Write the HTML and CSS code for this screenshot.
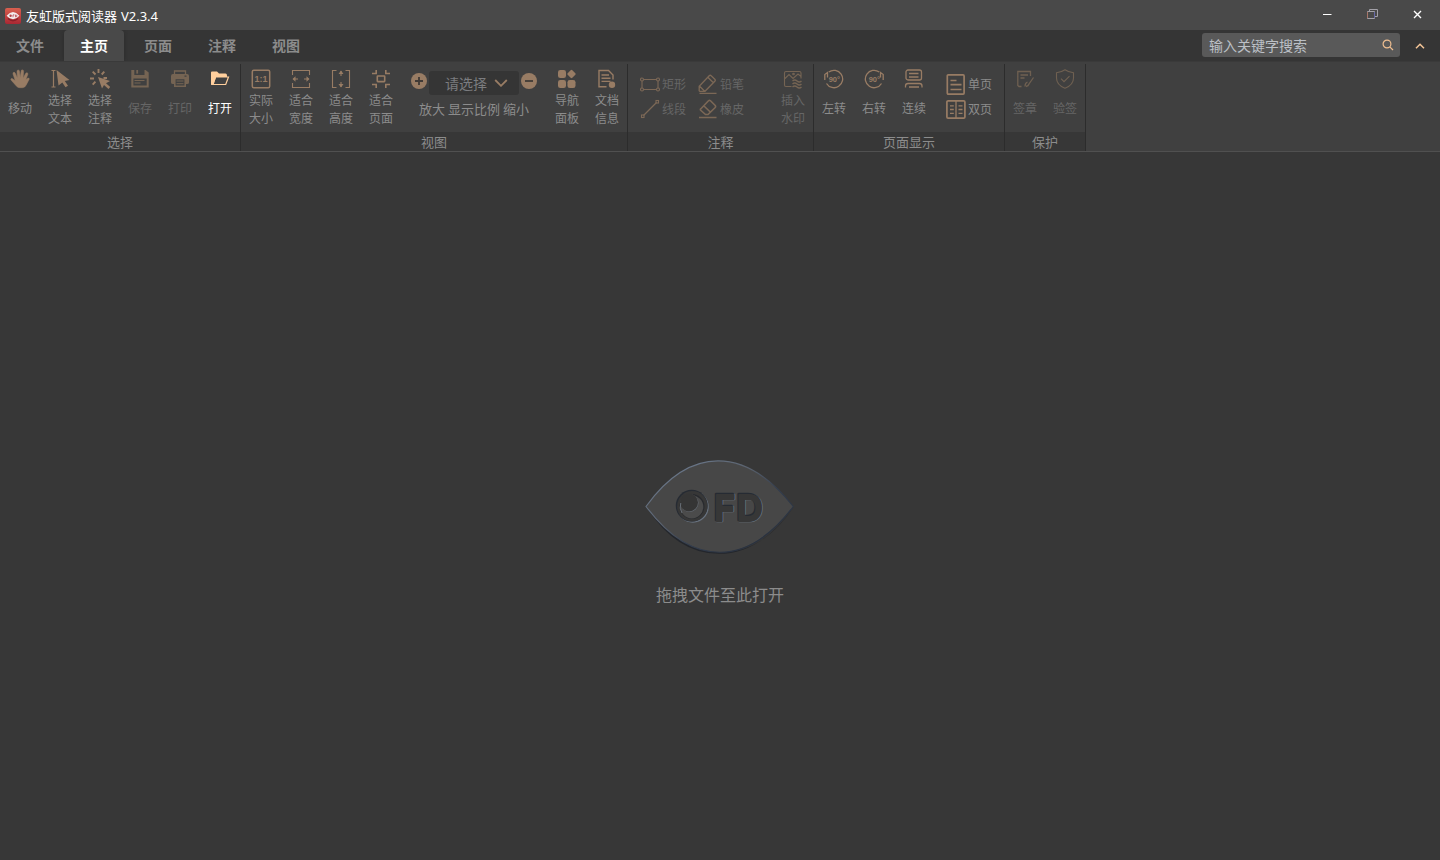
FILE: index.html
```html
<!DOCTYPE html>
<html lang="zh-CN">
<head>
<meta charset="utf-8">
<title>友虹版式阅读器 V2.3.4</title>
<link rel="stylesheet" href="styles.css">
</head>
<body>
<header class="titlebar">
  <svg class="logo" width="16" height="16" viewBox="0 0 16 16">
    <defs><linearGradient id="red" x1="0" y1="0" x2="0" y2="1"><stop offset="0" stop-color="#d9604f"/><stop offset="1" stop-color="#a92733"/></linearGradient></defs>
    <rect width="16" height="16" rx="2" fill="url(#red)"/>
    <path d="M3 10.500Q8 15 13 10.500" fill="none" stroke="#8b1f29" stroke-width="1.400"/>
    <path d="M1.600 7.700Q8 .5 14.400 7.700Q8 15 1.600 7.700Z" fill="#f3eeee"/>
    <circle cx="5.600" cy="7.700" r="1.200" fill="#b8434a"/><path d="M8 9.200V6.900h1.400M10.500 6.900v2q1.600 0 1.500-1T10.500 6.900" fill="none" stroke="#b8434a" stroke-width=".8"/>
  </svg>
  <h1 class="title">友虹版式阅读器 <span class="version">V2.3.4</span></h1>
  <div class="window-controls">
    <svg width="45" height="30" viewBox="0 0 45 30"><path d="M18 14.500h8.500" stroke="#fff" stroke-width="1"/></svg>
    <svg width="45" height="30" viewBox="0 0 45 30" fill="none" stroke="#a3a1a8"><path d="M17.500 11.500h7v7h-7z"/><path d="M19.500 11.500v-2h8v7h-3"/><path d="M17.500 12v6" stroke="#a77568"/><path d="M24.500 12v6" stroke="#6669a8"/></svg>
    <svg width="45" height="30" viewBox="0 0 45 30"><path d="M19 11l7 7M26 11l-7 7" stroke="#fff" stroke-width="1.400"/></svg>
  </div>
</header>

<nav class="tabs">
  <a class="tab">文件</a>
  <a class="tab tab-active">主页</a>
  <a class="tab">页面</a>
  <a class="tab">注释</a>
  <a class="tab">视图</a>
  <div class="search">
    <span>输入关键字搜索</span>
    <svg width="12" height="12" viewBox="0 0 12 12" fill="none" stroke="#f0bf91" stroke-width="1.200"><circle cx="5" cy="5" r="3.900"/><path d="M7.800 7.800L11 11"/></svg>
  </div>
  <svg class="collapse" width="10" height="6" viewBox="0 0 10 6" fill="none" stroke="#f5c698" stroke-width="1.500"><path d="M1 5.200l4-4 4 4"/></svg>
</nav>

<section class="ribbon">
  <div class="group group-select">
    <div class="tools">
      <div class="tool">
        <svg class="icon" viewBox="0 0 20 20"><path fill="currentColor" stroke="currentColor" stroke-width=".5" d="M6.800 17.500L1.200 11.200Q.2 9.800 1.500 9.500Q2.600 9.400 3.600 10.500L5.200 11.500L3 5Q2.700 3.400 3.900 3.300Q4.900 3.200 5.400 4.500L7.400 9L7 2.500Q7 1 8.200 1Q9.400 1 9.500 2.500L10.200 8.600L11.200 2Q11.400.7 12.500.9Q13.700 1 13.600 2.500L13.100 9.200L15.600 4.600Q16.200 3.400 17.200 3.800Q18.200 4.200 17.800 5.500L15.800 10.500L17.600 9.300Q19.600 8.600 19.200 10.300L16.200 16Q15 18.700 12.500 18.700H10Q8 18.700 6.800 17.500Z"/></svg>
        <span>移动</span>
      </div>
      <div class="tool two-line">
        <svg class="icon" viewBox="0 0 20 20"><path d="M1.500 1.500h4M1.500 18h4M3.500 1.500V18" stroke-width="1.200"/><path d="M6.500 1L19.500 11L14.800 12L18 16.800L15.500 18.300L12.300 13.500L8.500 16.500Z" fill="currentColor" stroke="none"/></svg>
        <span>选择<br>文本</span>
      </div>
      <div class="tool two-line">
        <svg class="icon" viewBox="0 0 20 20"><path d="M8.500 0v4M2.700 2.700l2.800 2.800M14.300 2.700l-2.600 2.800M0 9.500h4M2.700 15.700l2.700-3M13.500 9h3.500" stroke-width="1.900"/><path d="M8 8L20 12L16 14.200L20.300 18L18.500 20L14 15.900L12 19.500Z" fill="currentColor" stroke="none"/></svg>
        <span>选择<br>注释</span>
      </div>
      <div class="tool disabled">
        <svg class="icon" viewBox="0 0 20 20" fill="currentColor" stroke="none"><path class="solid" d="M1.300 1H4.300V6H14.500V1H15.500L18.700 3.500V18.600H1.300ZM3.400 9.500V16.600H16.700V9.500Z" fill-rule="evenodd"/><path class="solid" d="M6.300 1h1.800v3.600H6.300z"/><path d="M4.500 11.500h10M4.500 14h6" stroke="currentColor" stroke-width="1"/></svg>
        <span>保存</span>
      </div>
      <div class="tool disabled">
        <svg class="icon" viewBox="0 0 20 20"><path d="M4.500 5.500V2h11v3.500" stroke-width="1.300"/><path class="solid" d="M3 5h14q2 0 2 2v6.500q0 1.500-2 1.500h-1v3H4v-3H3q-2 0-2-1.500V7q0-2 2-2zm2.600 5.200v6.400h8.800v-6.400zM14.500 6.500v1.200h2V6.500z" fill-rule="evenodd"/><path d="M6.500 12h7M6.500 14.700h7"/></svg>
        <span>打印</span>
      </div>
      <div class="tool active">
        <svg class="icon" viewBox="0 0 20 20"><path class="solid" d="M1 15.500V3.500Q1 2.500 2 2.500h5l2 2h6.500q1.500 0 1.500 2v1.500H6L3.500 16H2Q1 16 1 15.500Z"/><path d="M5.600 8H18.500L15.700 15.500H2.700Z" stroke-width="1.200"/></svg>
        <span>打开</span>
      </div>
    </div>
    <div class="caption">选择</div>
  </div>

  <div class="group group-view">
    <div class="tools">
      <div class="tool two-line">
        <svg class="icon" viewBox="0 0 20 20"><rect x="1.300" y="1.300" width="17.400" height="17.400" rx="1.500" stroke-width="1.500"/><text class="scale-text" x="10" y="13">1:1</text></svg>
        <span>实际<br>大小</span>
      </div>
      <div class="tool two-line">
        <svg class="icon thin" viewBox="0 0 20 20"><path d="M1.500 6V1.500h17V6M1.500 14v4.500h17V14M2 10h5M18 10h-5"/><path class="solid" d="M4.500 7.300L1.500 10l3 2.700zM15.500 7.300l3 2.700-3 2.700z"/></svg>
        <span>适合<br>宽度</span>
      </div>
      <div class="tool two-line">
        <svg class="icon thin" viewBox="0 0 20 20"><path d="M5.500 1.500h-4v17h4M14.500 1.500h4v17h-4M10 2v5M10 18v-5"/><path class="solid" d="M7.500 5L10 1.500 12.500 5zM7.500 15l2.500 3.500 2.500-3.500z"/></svg>
        <span>适合<br>高度</span>
      </div>
      <div class="tool two-line">
        <svg class="icon page-fit" viewBox="0 0 20 20"><rect x="6.300" y="7" width="7.400" height="5.600" rx=".5"/><path d="M5.200 1v3.500H1M14.800 1v3.500H19M5.200 19v-3.500H1M14.800 19v-3.500H19"/></svg>
        <span>适合<br>页面</span>
      </div>
      <div class="zoom">
        <div class="zoom-row">
          <svg width="16" height="16" viewBox="0 0 16 16"><circle cx="8" cy="8" r="8" fill="#987c64"/><path d="M4 8h8M8 4v8" stroke="#403a36" stroke-width="1.800"/></svg>
          <div class="select"><span>请选择</span><svg width="14" height="8" viewBox="0 0 14 8" fill="none" stroke="#987c64" stroke-width="1.800"><path d="M1.200 1l5.800 5.800L12.800 1"/></svg></div>
          <svg width="16" height="16" viewBox="0 0 16 16"><circle cx="8" cy="8" r="8" fill="#987c64"/><path d="M4 8h8" stroke="#403a36" stroke-width="1.800"/></svg>
        </div>
        <div class="zoom-labels"><span>放大</span><span>显示比例</span><span>缩小</span></div>
      </div>
      <div class="tool two-line">
        <svg class="icon" viewBox="0 0 20 20"><g class="solid"><rect x="1" y="1" width="8" height="8" rx="2.300"/><rect x="11.200" y="1.700" width="6.600" height="6.600" rx="1.200" transform="rotate(45 14.500 5)"/><rect x="1" y="11" width="8" height="8" rx="2.300"/><rect x="10.500" y="11" width="8" height="8" rx="2.300"/></g></svg>
        <span>导航<br>面板</span>
      </div>
      <div class="tool two-line">
        <svg class="icon" viewBox="0 0 20 20"><g stroke-width="1.400"><path d="M9.500 17.800H2V1.500h9.500L16 6V10.500M4.500 6h7.500M4.500 9.200h9M4.500 12.400h9"/></g><circle class="solid" cx="15" cy="15.700" r="3.200"/></svg>
        <span>文档<br>信息</span>
      </div>
    </div>
    <div class="caption">视图</div>
  </div>

  <div class="group group-note">
    <div class="tools">
      <div class="pairs">
        <div class="pair"><svg class="icon thin" viewBox="0 0 20 20"><path d="M3.500 5.500h13M3.500 15.500h13M2 7v7M18 7v7"/><circle cx="2" cy="5.500" r="1.500"/><circle cx="18" cy="5.500" r="1.500"/><circle cx="2" cy="15.500" r="1.500"/><circle cx="18" cy="15.500" r="1.500"/></svg><span>矩形</span></div>
        <div class="pair"><svg class="icon" viewBox="0 0 20 20"><path d="M1.200 17.300V12.200L11.200 1.800Q12.200.8 13.200 1.800L16.800 5.200Q17.800 6.200 16.800 7.200L7 17.300H1.200M9.800 3.200l5.600 5.600M1.700 12.200l5 5M1.500 19.500h17" stroke-width="1.300"/></svg><span>铅笔</span></div>
        <div class="pair"><svg class="icon thin" viewBox="0 0 20 20"><path d="M3.500 16.500L16.500 3.500" stroke-width="1.300"/><rect x="1.500" y="16" width="2.500" height="2.500"/><rect x="16" y="1.500" width="2.500" height="2.500"/></svg><span>线段</span></div>
        <div class="pair"><svg class="icon" viewBox="0 0 20 20"><path d="M2.700 10L10.500 1.800Q11.500.8 12.500 1.800L17.200 6.500Q18 7.500 17.200 8.500L10 15.500H7.500L2.700 11.300Q2 10.500 2.700 10ZM6 7l6.500 6.300M1 18.500h17.500" stroke-width="1.600"/></svg><span>橡皮</span></div>
      </div>
      <div class="tool two-line disabled watermark">
        <svg class="icon thin" viewBox="0 0 20 20"><path d="M8.500 17.500H3Q1.500 17.500 1.500 16V4Q1.500 2.500 3 2.500h13.500Q18 2.500 18 4v5.500M2 9.500l4-4 4 4 5-4.500 3 2.500"/><circle cx="10.500" cy="5" r=".8"/><path d="M9.500 12q2.200-2 4.500 0t4.500 0M9.500 15q2.200-2 4.500 0t4.500 0M9.500 18q2.200-2 4.500 0t4.500 0" stroke-width="1.400"/></svg>
        <span>插入<br>水印</span>
      </div>
    </div>
    <div class="caption">注释</div>
  </div>

  <div class="group group-page">
    <div class="tools">
      <div class="tool">
        <svg class="icon" viewBox="0 0 20 20"><g stroke-width="1.300"><path d="M4.800 3A8.700 8.700 0 1 1 2.500 14.500M.8 11V5.500L3.500 3.500V8.500"/></g><text class="angle-text" x="10.300" y="12.800">90°</text></svg>
        <span>左转</span>
      </div>
      <div class="tool">
        <svg class="icon" viewBox="0 0 20 20"><g stroke-width="1.300"><path d="M15.200 3A8.700 8.700 0 1 0 17.500 14.500M19.200 11V5.500L16.500 3.500V8.500"/></g><text class="angle-text" x="10.300" y="12.800">90°</text></svg>
        <span>右转</span>
      </div>
      <div class="tool">
        <svg class="icon" viewBox="0 0 20 20"><g stroke-width="1.300"><rect x="2" y="1" width="15.500" height="10" rx="2"/><path d="M5 4.500h9.500M5 8h9.500M1.500 18.500v-1.500q0-2.500 2.500-2.500h11.500q2.500 0 2.500 2.500v1.500M5 18h10"/></g></svg>
        <span>连续</span>
      </div>
      <div class="pages">
        <div class="page-mode"><svg class="page-icon" viewBox="0 0 20 21"><rect x="1.300" y=".9" width="16.800" height="19.200" rx="1"/><path d="M4.500 6.500h6M4.500 10.700h11M4.500 15.500h11"/></svg><span>单页</span></div>
        <div class="page-mode"><svg class="page-icon" viewBox="0 0 20 21"><rect x=".9" y="1.800" width="18" height="17.400" rx="1.200"/><path d="M10 1.500v18M4 6.800h3.800M4 10.500h3.800M4 14.300h3.800M12.500 6.800h4M12.500 10.500h4M12.500 14.300h4" stroke-width="1.300"/></svg><span>双页</span></div>
      </div>
    </div>
    <div class="caption">页面显示</div>
  </div>

  <div class="group group-protect">
    <div class="tools">
      <div class="tool disabled">
        <svg class="icon" viewBox="0 0 20 20"><path d="M6.500 17.500H4L2.800 16.500V2.500H15.500V7M5.500 6h7.500M5.500 9h4M10 17.500Q10 14 12.500 13M11 17.500Q13.500 17 14 15L18.500 8.500" stroke-width="1.300"/></svg>
        <span>签章</span>
      </div>
      <div class="tool disabled">
        <svg class="icon" viewBox="0 0 20 20"><path d="M10 .8Q14 3.500 18.500 3.800V9Q18.500 16 10 19.200Q1.500 16 1.500 9V3.800Q6 3.500 10 .8ZM6 9.700l3 3 5.500-5.500" stroke-width="1.100"/></svg>
        <span>验签</span>
      </div>
    </div>
    <div class="caption">保护</div>
  </div>
</section>

<main class="workspace">
  <svg class="eye" width="150" height="96" viewBox="0 0 150 96">
    <defs>
      <linearGradient id="rim" x1="0" y1="0" x2="1" y2="1"><stop offset="0" stop-color="#74849a"/><stop offset=".4" stop-color="#59616d"/><stop offset=".6" stop-color="#343e4e"/><stop offset="1" stop-color="#202835"/></linearGradient>
    </defs>
    <path d="M3 49Q33 95 75 94.800T149.700 48Q119 94 75 93.500" fill="#23262c"/>
    <path d="M2 47.500C46-13.300 101-13.300 149.300 47.500C103 108.500 48 108.500 2 47.500Z" fill="#474747" stroke="url(#rim)" stroke-width="1.200"/>
    <circle cx="48.900" cy="47.900" r="15.800" fill="#68727f"/>
    <circle cx="47.700" cy="46.700" r="15.900" fill="#262b33"/>
    <circle cx="48.300" cy="47.300" r="15.200" fill="#373737"/>
    <circle cx="48" cy="47.500" r="12.500" fill="#282a2e"/>
    <circle cx="47.800" cy="47.900" r="11.500" fill="#4b4b4b"/>
    <circle cx="45.500" cy="44" r="9" fill="#656b73"/>
    <circle cx="45" cy="43.500" r="9" fill="#353535"/>
    <path d="M36.800 44A11.500 11.500 0 0 0 38 54" fill="none" stroke="#686e76" stroke-width="1"/>
    <g class="mark-text">
      <g class="mark-light"><text x="70.800" y="62.200" textLength="21" lengthAdjust="spacingAndGlyphs">F</text><text x="93.300" y="62.200" textLength="26" lengthAdjust="spacingAndGlyphs">D</text></g>
      <g class="mark-dark"><text x="69.600" y="61" textLength="21" lengthAdjust="spacingAndGlyphs">F</text><text x="92.100" y="61" textLength="26" lengthAdjust="spacingAndGlyphs">D</text></g>
      <g class="mark-face"><text x="70.200" y="61.600" textLength="21" lengthAdjust="spacingAndGlyphs">F</text><text x="92.700" y="61.600" textLength="26" lengthAdjust="spacingAndGlyphs">D</text></g>
    </g>
  </svg>
  <p class="hint">拖拽文件至此打开</p>
</main>
</body>
</html>
```
FILE: styles.css
```css
* { box-sizing: border-box; }
body {
  margin: 0;
  width: 1440px;
  height: 860px;
  overflow: hidden;
  display: flex;
  flex-direction: column;
  background: #373737;
  color: #8c8c8c;
  font-family: "Noto Sans CJK SC", sans-serif;
  font-size: 12px;
}
svg { display: block; flex: none; }

.titlebar {
  height: 30px;
  display: flex;
  align-items: center;
  padding-left: 5px;
  background: #494949;
}
.logo { margin-top: 1px; }
.title {
  margin: 2px 0 0 5px;
  font-size: 13px;
  font-weight: 400;
  line-height: 20px;
  color: #fff;
}
.version { margin-left: 1px; font-family: "Noto Sans", sans-serif; font-size: 13px; }
.window-controls { display: flex; margin-left: auto; }

.tabs {
  height: 31px;
  display: flex;
  align-items: center;
  gap: 4px;
  background: #353535;
}
.tab {
  width: 60px;
  height: 31px;
  line-height: 31px;
  text-align: center;
  font-size: 14px;
  font-weight: 700;
  color: #8c8c8c;
}
.tab-active {
  background: #494949;
  color: #fff;
  border-radius: 4px 4px 0 0;
  box-shadow: 0 0 4px #2b2b2b;
  clip-path: inset(0 -4px 0 -4px);
}
.search {
  display: flex;
  align-items: center;
  justify-content: space-between;
  width: 198px;
  height: 24px;
  margin: -1px 0 0 auto;
  padding: 0 6px 0 7px;
  border-radius: 3px;
  background: #595959;
  color: #bcc0c6;
  font-size: 14px;
  line-height: 24px;
}
.collapse { margin: 0 15px 0 11px; }

.ribbon {
  height: 91px;
  display: flex;
  background: #404040;
  border-bottom: 1px solid #505050;
  border-top: 1px solid #3a3a3a;
}
.group {
  display: flex;
  flex-direction: column;
  border-right: 1px solid #2c2c2c;
  margin-top: 2px;
}
.group-select { width: 241px; }
.group-view { width: 387px; }
.group-note { width: 186px; }
.group-page { width: 191px; }
.group-protect { width: 81px; }
.tools { display: flex; height: 68px; }
.caption {
  height: 19px;
  line-height: 20px;
  background: #373737;
  text-align: center;
  font-size: 13px;
}
.tool {
  width: 40px;
  padding-top: 5px;
  display: flex;
  flex-direction: column;
  align-items: center;
  line-height: 18px;
}
.tool span { margin-top: 10px; }
.two-line span { margin-top: 2px; }
.icon, .page-icon {
  width: 20px;
  height: 20px;
  color: #987c64;
  fill: none;
  stroke: currentColor;
}
.solid { fill: currentColor; stroke: none; }
.thin { stroke-width: 1.1; }
.page-fit { stroke-width: 1.6; }
.disabled { color: #666; }
.disabled .icon { color: #756453; }
.active { color: #fff; }
.active .icon { color: #ffcf9d; }
.scale-text, .angle-text {
  fill: currentColor;
  stroke: none;
  font-family: "Liberation Sans", sans-serif;
  font-weight: 700;
  font-size: 9px;
  text-anchor: middle;
}
.angle-text { font-size: 7.5px; }

.zoom { width: 146px; padding: 7px 10px 0 10px; }
.zoom-row { display: flex; align-items: center; gap: 2px; height: 24px; }
.zoom-row > svg { margin-top: -4px; }
.select {
  flex: 1;
  display: flex;
  align-items: center;
  justify-content: space-between;
  height: 24px;
  padding: 0 11px 0 16px;
  border-radius: 3px;
  background: #353535;
  color: #7b7c7f;
  font-size: 14px;
  line-height: 24px;
}
.zoom-labels {
  display: flex;
  justify-content: space-between;
  margin: 4px 0 0;
  padding: 0 8px;
  font-size: 13px;
  line-height: 20px;
}

.pairs {
  display: grid;
  grid-template-columns: 58px 58px;
  grid-template-rows: 25px 25px;
  padding: 7px 0 0 12px;
}
.pair { display: flex; align-items: center; gap: 2px; color: #666; }
.pair .icon { color: #7c6856; }
.watermark { margin-left: auto; }
.pages { padding: 8px 0 0 12px; }
.page-mode { display: flex; align-items: center; gap: 2px; height: 25px; }
.page-mode span { margin-top: -2px; }
.page-icon { height: 21px; stroke-width: 1.7; }

.group-protect .icon { color: #6f6051; }

.workspace {
  flex: 1;
  display: flex;
  flex-direction: column;
  align-items: center;
  padding-top: 307px;
}
.eye { margin-right: 2px; }
.hint { margin: 27px 0 0; font-size: 16px; line-height: 24px; }
.mark-text {
  font-family: Inter, sans-serif;
  font-size: 36px;
  font-weight: 600;
  stroke-linejoin: round;
  stroke-width: 2.6px;
}
.mark-light { fill: #68727f; stroke: #68727f; }
.mark-dark { fill: #262b33; stroke: #262b33; }
.mark-face { fill: #373737; stroke: #373737; stroke-width: 2px; }
```
